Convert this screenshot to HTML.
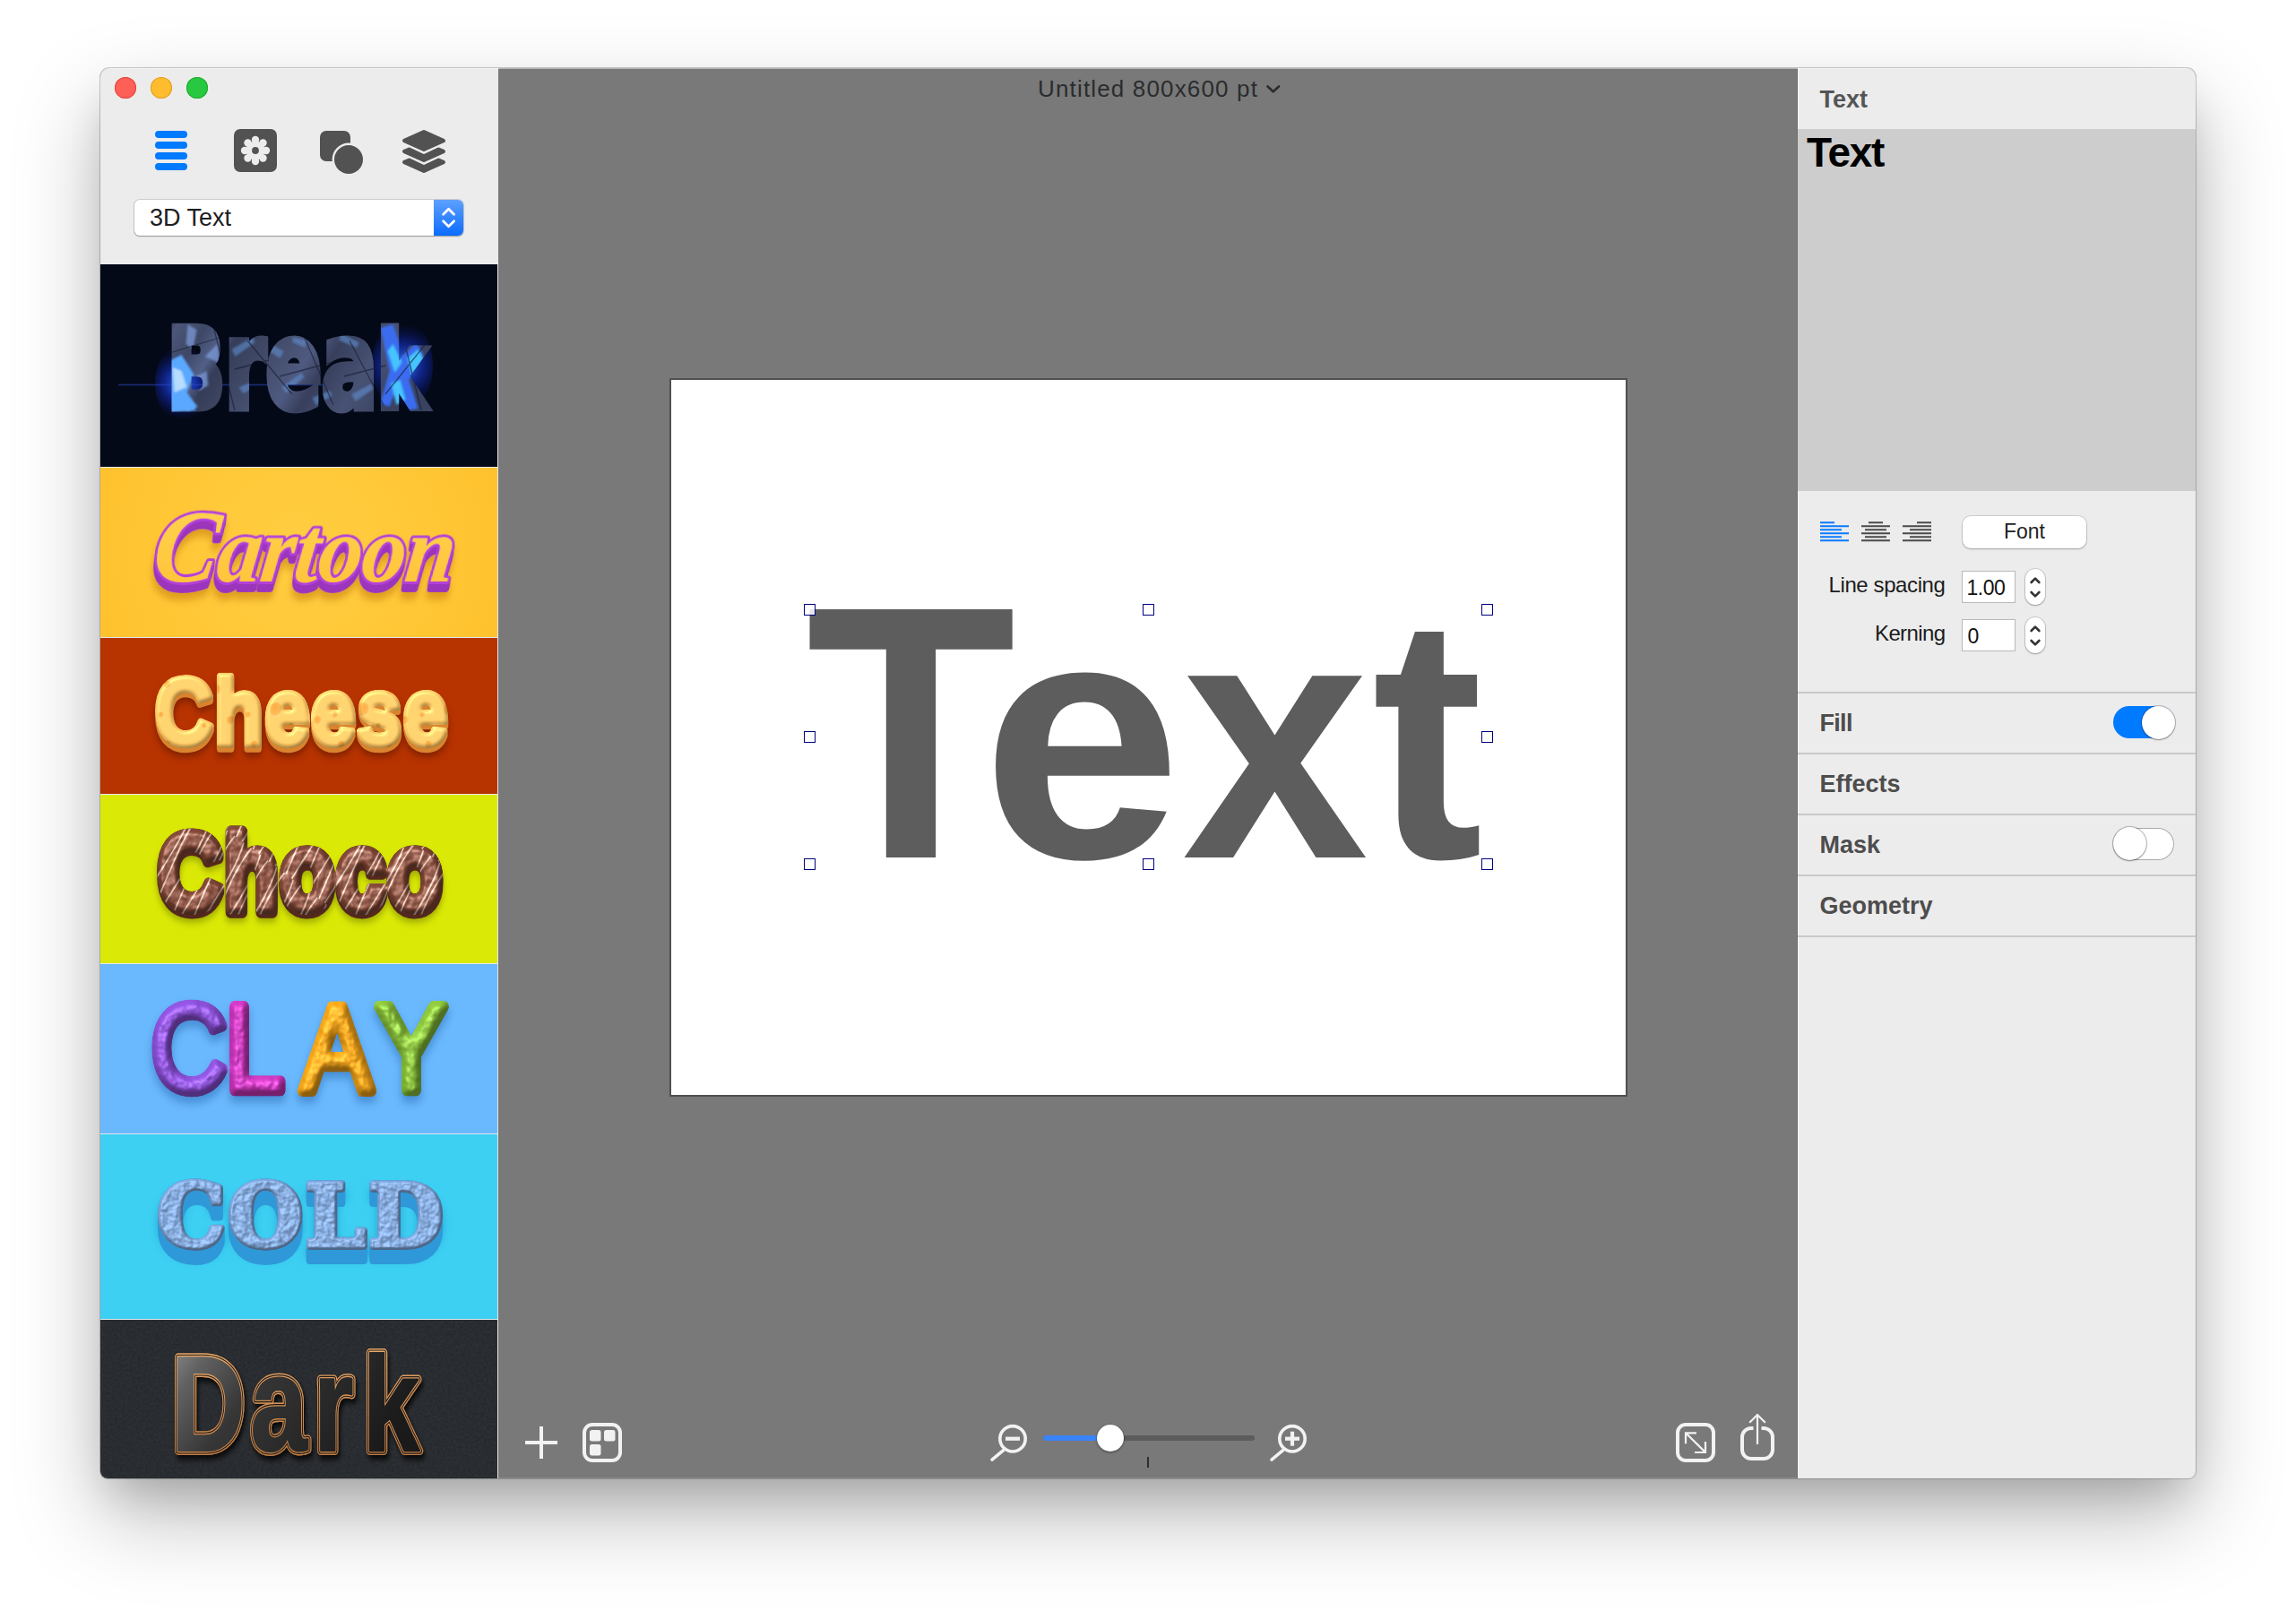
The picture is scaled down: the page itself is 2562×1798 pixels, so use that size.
<!DOCTYPE html>
<html lang="en">
<head>
<meta charset="utf-8">
<title>Untitled 800x600 pt</title>
<style>
html,body{margin:0;padding:0;background:#fff;}
body{width:2562px;height:1798px;overflow:hidden;position:relative;font-family:"Liberation Sans",sans-serif;}
.abs,.win *{position:absolute;box-sizing:border-box;}
.shadow{position:absolute;left:112px;top:76px;width:2338px;height:1574px;border-radius:10px 10px 8px 8px;
  box-shadow:0 0 0 1px rgba(0,0,0,.2),0 42px 96px rgba(0,0,0,.27),0 26px 44px -12px rgba(0,0,0,.16);}
.win{position:absolute;left:112px;top:76px;width:2338px;height:1574px;border-radius:10px 10px 8px 8px;overflow:hidden;background:#797979;}
.pg{left:-112px;top:-76px;width:2562px;height:1798px;}
.t{white-space:nowrap;line-height:1;}
/* sidebar */
.side{left:112px;top:75px;width:444px;height:1575px;background:#ececec;}
.canvasarea{left:556px;top:75px;width:1450px;height:1575px;background:#797979;}
.panel{left:2006px;top:75px;width:444px;height:1575px;background:#ececec;}
.sec{font-size:27px;font-weight:bold;color:#4d4d4d;}
.big{font-size:384px;font-weight:bold;color:#5d5d5d;white-space:nowrap;line-height:1;top:631.7px;}
.big span{position:static;display:inline-block;transform-origin:50% 84.65%;}
.hd{width:13px;height:13px;border:1.5px solid #00007f;background:rgba(255,255,255,.85);}
.tl{width:24px;height:24px;border-radius:50%;top:86px;}
</style>
</head>
<body>
<div class="shadow"></div>
<div class="win"><div class="pg">
<!--SIDEBAR-->
<div class="side"></div>
<div class="tl" style="left:128px;background:#fe5f57;box-shadow:inset 0 0 0 1px #e2463e;"></div>
<div class="tl" style="left:168px;background:#febc2e;box-shadow:inset 0 0 0 1px #e0a028;"></div>
<div class="tl" style="left:208px;background:#28c840;box-shadow:inset 0 0 0 1px #1eab2f;"></div>
<svg class="abs" style="left:112px;top:75px" width="444" height="220" viewBox="112 75 444 220">
  <g fill="#007aff">
    <rect x="173" y="146" width="36" height="8" rx="4"/><rect x="173" y="158" width="36" height="8" rx="4"/>
    <rect x="173" y="170" width="36" height="8" rx="4"/><rect x="173" y="182" width="36" height="8" rx="4"/>
  </g>
  <rect x="261" y="144" width="48" height="48" rx="7" fill="#525252"/>
  <g fill="#ececec">
    <circle cx="285" cy="168" r="10.5"/>
    <circle cx="285" cy="156" r="4.2"/><circle cx="285" cy="180" r="4.2"/><circle cx="273" cy="168" r="4.2"/><circle cx="297" cy="168" r="4.2"/>
    <circle cx="276.5" cy="159.5" r="4.2"/><circle cx="293.5" cy="159.5" r="4.2"/><circle cx="276.5" cy="176.5" r="4.2"/><circle cx="293.5" cy="176.5" r="4.2"/>
  </g>
  <circle cx="285" cy="168" r="3.9" fill="#525252"/>
  <rect x="357" y="146" width="34" height="34" rx="7" fill="#525252"/>
  <circle cx="389" cy="178" r="18.4" fill="#ececec"/>
  <circle cx="389" cy="178" r="16" fill="#525252"/>
  <g fill="#525252" stroke="#525252" stroke-width="4.4" stroke-linejoin="round">
    <path d="M473 147.2L494.8 157L473 166.8L451.2 157Z"/>
    <path d="M451.2 169L456.6 166.7L473 174.6L489.4 166.7L494.8 169L473 178.8Z"/>
    <path d="M451.2 181L456.6 178.7L473 186.6L489.4 178.7L494.8 181L473 190.8Z"/>
  </g>
</svg>
<div class="dd" style="left:150px;top:223px;width:367px;height:40px;border-radius:6px;background:#fff;box-shadow:0 0 0 1px rgba(0,0,0,.13),0 1px 1.5px rgba(0,0,0,.28);overflow:hidden;">
  <div style="left:334px;top:0;width:33px;height:40px;background:linear-gradient(#5ea0ff,#0b6cff);"></div>
  <svg style="left:334px;top:0" width="33" height="40" viewBox="0 0 33 40"><path d="M10.6 16.2L16.6 10.2L22.6 16.2M10.6 23.8L16.6 29.8L22.6 23.8" fill="none" stroke="#fff" stroke-width="2.7" stroke-linecap="round" stroke-linejoin="round"/></svg>
  <div class="t" style="left:17px;top:7.3px;font-size:27px;color:#1d2023;">3D Text</div>
</div>
<!--THUMBS-->
<div class="thumbs" style="left:112px;top:295px;width:444px;height:1355px;background:#e4e8ea;overflow:hidden;"></div>
<!--T1 Break-->
<svg class="abs th" style="left:112px;top:295px" width="443" height="226" viewBox="112 295 443 226">
  <defs>
    <linearGradient id="brk" x1="0" y1="0" x2="1" y2=".35">
      <stop offset="0" stop-color="#434b68"/><stop offset=".06" stop-color="#333a54"/><stop offset=".1" stop-color="#4c5678"/>
      <stop offset=".2" stop-color="#3e4766"/><stop offset=".28" stop-color="#525f88"/><stop offset=".33" stop-color="#353d58"/>
      <stop offset=".5" stop-color="#444d6c"/><stop offset=".62" stop-color="#4f5a80"/><stop offset=".7" stop-color="#373f5c"/>
      <stop offset=".85" stop-color="#485274"/><stop offset="1" stop-color="#394260"/>
    </linearGradient>
    <radialGradient id="glowL" gradientUnits="userSpaceOnUse" cx="203" cy="428" r="40"><stop offset="0" stop-color="#3a78ff" stop-opacity=".95"/><stop offset=".5" stop-color="#1a3cf0" stop-opacity=".5"/><stop offset="1" stop-color="#0a1aa0" stop-opacity="0"/></radialGradient>
    <radialGradient id="glowR" gradientUnits="userSpaceOnUse" cx="449" cy="408" r="46"><stop offset="0" stop-color="#3f8cff" stop-opacity=".95"/><stop offset=".5" stop-color="#1a3cf0" stop-opacity=".5"/><stop offset="1" stop-color="#0a1aa0" stop-opacity="0"/></radialGradient>
    <mask id="brkclip" maskUnits="userSpaceOnUse" x="112" y="295" width="443" height="226"><text transform="translate(187 454.5) scale(.683 1)" font-family="'DejaVu Sans','Liberation Sans',sans-serif" font-weight="bold" font-size="123" fill="#fff" stroke="#fff" stroke-width="9"><tspan>B</tspan><tspan font-size="135">rea</tspan><tspan font-size="118">k</tspan></text></mask>
    <filter id="bblur" x="-20%" y="-20%" width="140%" height="140%"><feGaussianBlur stdDeviation="1.2"/></filter>
  </defs>
  <rect x="112" y="295" width="443" height="226" fill="#040918"/>
  <ellipse cx="203" cy="428" rx="30" ry="44" fill="url(#glowL)"/>
  <ellipse cx="449" cy="408" rx="34" ry="52" fill="url(#glowR)"/>
  <rect x="132" y="428.7" width="232" height="1.6" fill="#2a48c8" opacity=".55"/>
  <text transform="translate(187 454.5) scale(.683 1)" font-family="'DejaVu Sans','Liberation Sans',sans-serif" font-weight="bold" font-size="123" fill="url(#brk)" stroke="url(#brk)" stroke-width="9" stroke-linejoin="miter"><tspan>B</tspan><tspan font-size="135">rea</tspan><tspan font-size="118">k</tspan></text>
  <g mask="url(#brkclip)">
    <g filter="url(#bblur)" transform="translate(-3.5 0)">
    <path d="M190 404l16-8 14 22-8 20 12 16-10 6-24-10zM192 440l20 2 10 16-28 2z" fill="#5aa8ff"/>
    <path d="M196 410l10 4 6 18-14 6z" fill="#b8dcff"/>
    <path d="M213 362l10 6-4 22-8-6zM232 398l14-14 4 22zM222 420l12-6 2 16-10 6z" fill="#7f9fe0" opacity=".7"/>
    <path d="M428 366l14-4 12 34 14-14 8 14-16 28 10 32-12 2-12-26-8 22-10-4 10-36z" fill="#3a6cf0"/>
    <path d="M442 384l10 20-8 12-8-24zM458 400l12-10 6 10-12 22zM440 428l10-4 6 22-10 6z" fill="#45c4ff"/>
    <path d="M262 390l24-14 2 6-22 16zM270 432l26-10 3 5-24 12zM306 384l14 8-4 8-12-8zM318 432l22-16 3 5-20 18zM352 444l20-8 2 6-18 10zM330 376l16 4-2 8-14-6zM384 372l20 10-2 6-20-8zM396 440l22-12 2 6-20 14z" fill="#5f8fd0" opacity=".6"/>
    </g>
    <path d="M186 395L248 376M236 356L262 458M276 380L326 440M262 412L300 402M336 368L372 452M312 420L372 404M390 380L428 452M384 420L430 408M446 360L470 458M430 440L478 380" stroke="#141a30" stroke-width="1.3" fill="none" opacity=".6"/>
  </g>
</svg>
<!--T2 Cartoon-->
<svg class="abs th" style="left:112px;top:522px" width="443" height="189" viewBox="112 522 443 189">
  <defs>
    <radialGradient id="cbg" gradientUnits="userSpaceOnUse" cx="333" cy="616" r="260"><stop offset="0" stop-color="#ffce42"/><stop offset="1" stop-color="#ffc12c"/></radialGradient>
    <linearGradient id="cfill" x1="0" y1="0" x2="0" y2="1"><stop offset="0" stop-color="#ffd552"/><stop offset="1" stop-color="#ffc136"/></linearGradient>
    <filter id="cext" x="-5%" y="-20%" width="110%" height="160%">
      <feMorphology in="SourceAlpha" operator="dilate" radius="0 3.5" result="d"/>
      <feOffset in="d" dy="4.5" result="do"/>
      <feFlood flood-color="#9b34bc"/><feComposite in2="do" operator="in" result="ext"/>
      <feGaussianBlur in="do" stdDeviation="4" result="b"/><feOffset in="b" dy="8" result="bo"/>
      <feFlood flood-color="#b86a00" flood-opacity=".45"/><feComposite in2="bo" operator="in" result="sh"/>
      <feMerge><feMergeNode in="sh"/><feMergeNode in="ext"/><feMergeNode in="SourceGraphic"/></feMerge>
    </filter>
  </defs>
  <rect x="112" y="522" width="443" height="189" fill="url(#cbg)"/>
  <text transform="translate(168 649) skewX(-7) scale(.935 1)" font-family="'Liberation Serif','DejaVu Serif',serif" font-weight="bold" font-style="italic" font-size="106" fill="url(#cfill)" stroke="#b540d8" stroke-width="6" stroke-linejoin="round" paint-order="stroke" filter="url(#cext)" letter-spacing="-1"><tspan font-size="116">C</tspan>artoon</text>
</svg>
<!--T3 Cheese-->
<svg class="abs th" style="left:112px;top:712px" width="443" height="174" viewBox="112 712 443 174">
  <defs>
    <radialGradient id="hole" cx=".4" cy=".35" r=".7"><stop offset="0" stop-color="#ee9f38"/><stop offset=".7" stop-color="#f4b04c"/><stop offset="1" stop-color="#ffd888"/></radialGradient>
    <pattern id="chholes" patternUnits="userSpaceOnUse" x="0" y="-80" width="113" height="67">
      <rect width="113" height="67" fill="#ffc965"/>
      <g fill="url(#hole)"><circle cx="16" cy="14" r="4.5"/><circle cx="44" cy="42" r="8"/><circle cx="80" cy="20" r="6"/><circle cx="98" cy="54" r="5"/><circle cx="64" cy="60" r="3.2"/><circle cx="8" cy="48" r="3.5"/></g>
    </pattern>
    <filter id="fcheese" x="-10%" y="-25%" width="120%" height="170%" color-interpolation-filters="sRGB"><feGaussianBlur in="SourceAlpha" stdDeviation="2.2" result="bl"/><feDiffuseLighting in="bl" surfaceScale="3.5" diffuseConstant="1.2" lighting-color="#fff" result="dif"><feDistantLight azimuth="235" elevation="48"/></feDiffuseLighting><feComposite in="dif" in2="SourceGraphic" operator="arithmetic" k1="0.38" k2="0" k3="0.66" k4="0" result="lit"/><feSpecularLighting in="bl" surfaceScale="3.5" specularConstant="0.18" specularExponent="18" lighting-color="#fff" result="spc"><feDistantLight azimuth="235" elevation="48"/></feSpecularLighting><feComposite in="spc" in2="SourceAlpha" operator="in" result="spi"/><feComposite in="lit" in2="spi" operator="arithmetic" k1="0" k2="1" k3="1" k4="0" result="face0"/><feComposite in="face0" in2="SourceAlpha" operator="in" result="face"/><feGaussianBlur in="SourceAlpha" stdDeviation="4.5" result="sb"/><feOffset in="sb" dy="9" result="so"/><feFlood flood-color="#641800" flood-opacity="0.7"/><feComposite in2="so" operator="in" result="sh"/><feMorphology in="SourceAlpha" operator="dilate" radius="0 2" result="ed"/><feOffset in="ed" dy="2.5" result="eo"/><feFlood flood-color="#d9832e"/><feComposite in2="eo" operator="in" result="ex"/><feMerge><feMergeNode in="sh"/><feMergeNode in="ex"/><feMergeNode in="face"/></feMerge></filter>
  </defs>
  <rect x="112" y="712" width="443" height="174" fill="#b73300"/>
  <text transform="translate(173 830) scale(.86 1)" font-family="'Liberation Sans','DejaVu Sans',sans-serif" font-weight="bold" font-size="104" fill="url(#chholes)" stroke="url(#chholes)" stroke-width="8.5" stroke-linejoin="round" letter-spacing="2" filter="url(#fcheese)">Cheese</text>
</svg>
<!--T4 Choco-->
<svg class="abs th" style="left:112px;top:887px" width="443" height="188" viewBox="112 887 443 188">
  <defs>
    <pattern id="chz" patternUnits="userSpaceOnUse" x="170" y="920" width="26" height="120" patternTransform="rotate(32 330 975)">
      <rect width="26" height="120" fill="#7a4333"/>
      <path d="M6 -2C-2 30 4 70 8 122M19 -2C27 30 21 70 17 122" fill="none" stroke="#ecd2c0" stroke-width="1.7"/>
    </pattern>
    <filter id="fchoco" x="-10%" y="-25%" width="120%" height="170%" color-interpolation-filters="sRGB"><feGaussianBlur in="SourceAlpha" stdDeviation="3.2" result="bl"/><feTurbulence type="fractalNoise" baseFrequency="0.09" numOctaves="2" seed="3" result="tn"/><feColorMatrix in="tn" type="matrix" values="0 0 0 0 0  0 0 0 0 0  0 0 0 0 0  1 0 0 0 0" result="ta"/><feComposite in="bl" in2="ta" operator="arithmetic" k1="0" k2="0.78" k3="0.22" k4="0" result="bt"/><feComposite in="bt" in2="bl" operator="in" result="bump"/><feDiffuseLighting in="bump" surfaceScale="6.5" diffuseConstant="1.15" lighting-color="#fff" result="dif"><feDistantLight azimuth="235" elevation="48"/></feDiffuseLighting><feComposite in="dif" in2="SourceGraphic" operator="arithmetic" k1="0.45" k2="0" k3="0.6" k4="0" result="lit"/><feSpecularLighting in="bump" surfaceScale="6.5" specularConstant="0.35" specularExponent="14" lighting-color="#fff" result="spc"><feDistantLight azimuth="235" elevation="48"/></feSpecularLighting><feComposite in="spc" in2="SourceAlpha" operator="in" result="spi"/><feComposite in="lit" in2="spi" operator="arithmetic" k1="0" k2="1" k3="1" k4="0" result="face0"/><feComposite in="face0" in2="SourceAlpha" operator="in" result="face"/><feGaussianBlur in="SourceAlpha" stdDeviation="4" result="sb"/><feOffset in="sb" dy="8" result="so"/><feFlood flood-color="#6f7a00" flood-opacity="0.6"/><feComposite in2="so" operator="in" result="sh"/><feMorphology in="SourceAlpha" operator="dilate" radius="0 1.5" result="ed"/><feOffset in="ed" dy="2" result="eo"/><feFlood flood-color="#54281c"/><feComposite in2="eo" operator="in" result="ex"/><feMerge><feMergeNode in="sh"/><feMergeNode in="ex"/><feMergeNode in="face"/></feMerge></filter>
  </defs>
  <rect x="112" y="887" width="443" height="188" fill="#dbe906"/>
  <text transform="translate(176.5 1014) scale(.835 1)" font-family="'Liberation Sans','DejaVu Sans',sans-serif" font-weight="bold" font-size="118" fill="url(#chz)" stroke="url(#chz)" stroke-width="13" stroke-linejoin="round" letter-spacing="3" filter="url(#fchoco)">Choco</text>
</svg>
<!--T5 Clay-->
<svg class="abs th" style="left:112px;top:1076px" width="443" height="189" viewBox="112 1076 443 189">
  <defs><filter id="fclay" x="-10%" y="-25%" width="120%" height="170%" color-interpolation-filters="sRGB"><feGaussianBlur in="SourceAlpha" stdDeviation="4.5" result="bl"/><feTurbulence type="fractalNoise" baseFrequency="0.085" numOctaves="2" seed="3" result="tn"/><feColorMatrix in="tn" type="matrix" values="0 0 0 0 0  0 0 0 0 0  0 0 0 0 0  1 0 0 0 0" result="ta"/><feComposite in="bl" in2="ta" operator="arithmetic" k1="0" k2="0.76" k3="0.24" k4="0" result="bt"/><feComposite in="bt" in2="bl" operator="in" result="bump"/><feDiffuseLighting in="bump" surfaceScale="9" diffuseConstant="1.1" lighting-color="#fff" result="dif"><feDistantLight azimuth="235" elevation="48"/></feDiffuseLighting><feComposite in="dif" in2="SourceGraphic" operator="arithmetic" k1="0.47" k2="0" k3="0.58" k4="0" result="lit"/><feSpecularLighting in="bump" surfaceScale="9" specularConstant="0.2" specularExponent="12" lighting-color="#fff" result="spc"><feDistantLight azimuth="235" elevation="48"/></feSpecularLighting><feComposite in="spc" in2="SourceAlpha" operator="in" result="spi"/><feComposite in="lit" in2="spi" operator="arithmetic" k1="0" k2="1" k3="1" k4="0" result="face0"/><feComposite in="face0" in2="SourceAlpha" operator="in" result="face"/><feGaussianBlur in="SourceAlpha" stdDeviation="5" result="sb"/><feOffset in="sb" dy="7" result="so"/><feFlood flood-color="#1f5fa8" flood-opacity="0.45"/><feComposite in2="so" operator="in" result="sh"/><feMerge><feMergeNode in="sh"/><feMergeNode in="face"/></feMerge></filter></defs>
  <rect x="112" y="1076" width="443" height="189" fill="#6ab8fd"/>
  <text transform="translate(0 1217) scale(.86 1)" font-family="'Liberation Sans','DejaVu Sans',sans-serif" font-size="136" stroke-width="13" stroke-linejoin="round" stroke-linecap="round" filter="url(#fclay)" x="196.5 293 392 488.5"><tspan fill="#8a4fd6" stroke="#8a4fd6">C</tspan><tspan fill="#c936bc" stroke="#c936bc">L</tspan><tspan fill="#f2a41a" stroke="#f2a41a">A</tspan><tspan fill="#88c03a" stroke="#88c03a">Y</tspan></text>
</svg>
<!--T6 Cold-->
<svg class="abs th" style="left:112px;top:1266px" width="443" height="206" viewBox="112 1266 443 206">
  <defs><filter id="fcold" x="-10%" y="-25%" width="120%" height="170%" color-interpolation-filters="sRGB"><feGaussianBlur in="SourceAlpha" stdDeviation="1.8" result="bl"/><feTurbulence type="fractalNoise" baseFrequency="0.13" numOctaves="2" seed="3" result="tn"/><feColorMatrix in="tn" type="matrix" values="0 0 0 0 0  0 0 0 0 0  0 0 0 0 0  1 0 0 0 0" result="ta"/><feComposite in="bl" in2="ta" operator="arithmetic" k1="0" k2="0.58" k3="0.42" k4="0" result="bt"/><feComposite in="bt" in2="bl" operator="in" result="bump"/><feDiffuseLighting in="bump" surfaceScale="5" diffuseConstant="1.08" lighting-color="#fff" result="dif"><feDistantLight azimuth="235" elevation="48"/></feDiffuseLighting><feComposite in="dif" in2="SourceGraphic" operator="arithmetic" k1="0.42" k2="0" k3="0.6" k4="0" result="lit"/><feSpecularLighting in="bump" surfaceScale="5" specularConstant="0.14" specularExponent="10" lighting-color="#fff" result="spc"><feDistantLight azimuth="235" elevation="48"/></feSpecularLighting><feComposite in="spc" in2="SourceAlpha" operator="in" result="spi"/><feComposite in="lit" in2="spi" operator="arithmetic" k1="0" k2="1" k3="1" k4="0" result="face0"/><feComposite in="face0" in2="SourceAlpha" operator="in" result="face"/><feGaussianBlur in="SourceAlpha" stdDeviation="5" result="sb"/><feOffset in="sb" dy="10" result="so"/><feFlood flood-color="#0f78b8" flood-opacity="0.5"/><feComposite in2="so" operator="in" result="sh"/><feMorphology in="SourceAlpha" operator="dilate" radius="0 7.5" result="ed"/><feOffset in="ed" dy="8" result="eo"/><feFlood flood-color="#2f98d8"/><feComposite in2="eo" operator="in" result="ex"/><feMerge><feMergeNode in="sh"/><feMergeNode in="ex"/><feMergeNode in="face"/></feMerge></filter></defs>
  <rect x="112" y="1266" width="443" height="206" fill="#3dd0f3"/>
  <text transform="translate(176 1391) scale(1.0 1)" font-family="'DejaVu Serif','Liberation Serif',serif" font-weight="bold" font-size="95" fill="#84abe0" stroke="#84abe0" stroke-width="8" stroke-linejoin="round" letter-spacing="3.5" filter="url(#fcold)">COLD</text>
</svg>
<!--T7 Dark-->
<svg class="abs th" style="left:112px;top:1473px" width="443" height="177" viewBox="112 1473 443 177">
  <defs>
    <linearGradient id="dkf" x1="0" y1="0" x2="1" y2=".45"><stop offset="0" stop-color="#9a9a9a"/><stop offset=".18" stop-color="#626262"/><stop offset=".42" stop-color="#363636"/><stop offset="1" stop-color="#1a1a1a"/></linearGradient>
    <linearGradient id="dks" x1="0" y1="0" x2="0" y2="1"><stop offset="0" stop-color="#f0b070"/><stop offset="1" stop-color="#b8733a"/></linearGradient>
    <filter id="fdark" x="-5%" y="-10%" width="110%" height="130%"><feGaussianBlur in="SourceAlpha" stdDeviation="3"/><feOffset dx="2" dy="5" result="o"/><feFlood flood-color="#000" flood-opacity=".8"/><feComposite in2="o" operator="in" result="s"/><feMerge><feMergeNode in="s"/><feMergeNode in="SourceGraphic"/></feMerge></filter>
    <text id="dkt" font-family="'Liberation Sans','DejaVu Sans',sans-serif" font-weight="bold" font-size="150" x="-5 111.1 203.9 276">Dark</text>
    <filter id="dnoise" x="0" y="0" width="100%" height="100%"><feTurbulence type="fractalNoise" baseFrequency=".35" numOctaves="2" seed="5"/><feColorMatrix type="matrix" values="0 0 0 0 1  0 0 0 0 1  0 0 0 0 1  .07 0 0 0 -.015"/></filter>
  </defs>
  <rect x="112" y="1473" width="443" height="177" fill="#25282c"/>
  <rect x="112" y="1473" width="443" height="177" filter="url(#dnoise)"/>
  <g transform="translate(195 1619) scale(.76 1)" stroke-linejoin="round">
    <use href="#dkt" fill="#c98950" stroke="url(#dks)" stroke-width="10" filter="url(#fdark)"/>
    <use href="#dkt" fill="#17181a" stroke="#17181a" stroke-width="7.2"/>
    <use href="#dkt" fill="#c98950" stroke="url(#dks)" stroke-width="4.8"/>
    <use href="#dkt" fill="url(#dkf)" stroke="url(#dkf)" stroke-width="2.2"/>
  </g>
</svg>
<!--CANVAS-->
<div class="canvasarea"></div>
<div class="t" style="left:1158px;top:86.1px;font-size:26px;color:#2a2c2e;letter-spacing:1.16px;">Untitled 800x600 pt</div>
<svg class="abs" style="left:1410px;top:90px" width="22" height="18" viewBox="0 0 22 18"><path d="M4.5 6.5L10.7 12.3L17 6.5" fill="none" stroke="#2a2c2e" stroke-width="2.6" stroke-linecap="round" stroke-linejoin="round"/></svg>
<div style="left:747px;top:422px;width:1069px;height:802px;background:#fff;border:2px solid #4f4f4f;"></div>
<div class="big" style="left:899.2px;"><span style="transform:scaleY(1.0485)">T</span><span style="margin-left:-28.5px;transform:scaleX(1.045);transform-origin:100% 84.65%">e</span><span style="transform:scaleX(.973);transform-origin:0 84.65%">x</span><span style="transform:scale(.968,1.006);transform-origin:0 84.65%;margin-left:-1.5px">t</span></div>
<div class="hd" style="left:897px;top:674px;"></div><div class="hd" style="left:1274.7px;top:674px;"></div><div class="hd" style="left:1652.5px;top:674px;"></div><div class="hd" style="left:897px;top:815.5px;"></div><div class="hd" style="left:1652.5px;top:815.5px;"></div><div class="hd" style="left:897px;top:958px;"></div><div class="hd" style="left:1274.7px;top:958px;"></div><div class="hd" style="left:1652.5px;top:958px;"></div>
<!--BOTTOMBAR-->
<svg class="abs" style="left:556px;top:1560px" width="1450" height="90" viewBox="556 1560 1450 90">
  <g fill="#f2f2f2"><rect x="586" y="1608" width="36" height="4"/><rect x="602" y="1592" width="4" height="36"/>
   <rect x="658" y="1596" width="12.5" height="12.5" rx="2.5"/><rect x="674" y="1596" width="12.5" height="12.5" rx="2.5"/><rect x="658" y="1612" width="12.5" height="12.5" rx="2.5"/></g>
  <g fill="none" stroke="#f2f2f2" stroke-width="4">
   <rect x="652" y="1590" width="40" height="40" rx="9"/>
   <rect x="1872" y="1590" width="40" height="40" rx="9"/>
   <path d="M1956.5 1594H1954a10 10 0 0 0-10 10v14a10 10 0 0 0 10 10h14a10 10 0 0 0 10-10v-14a10 10 0 0 0-10-10h-2.5"/>
  </g>
  <g fill="none" stroke="#f2f2f2" stroke-width="2.2">
   <path d="M1881 1611.2V1599.3H1893M1881.5 1599.8L1902.7 1620.6M1891 1621H1903V1609"/>
   <path d="M1961 1612V1579M1952.2 1587.8L1961 1579L1969.8 1587.8"/>
  </g>
  <g fill="none" stroke="#f2f2f2" stroke-width="3.6" stroke-linecap="round">
   <circle cx="1130" cy="1605.8" r="14.2"/><path d="M1119.6 1618.6L1107 1629.2"/>
   <circle cx="1442" cy="1605.8" r="14.2"/><path d="M1431.6 1618.6L1419 1629.2"/>
  </g>
  <g fill="#f2f2f2"><rect x="1122" y="1603.6" width="16" height="4.2"/><rect x="1434" y="1603.6" width="16" height="4.2"/><rect x="1439.9" y="1597.7" width="4.2" height="16"/></g>
  <rect x="1164" y="1602" width="236" height="6" rx="3" fill="#5c5c5c"/>
  <rect x="1164" y="1602" width="80" height="6" rx="3" fill="#3b84f7"/>
  <rect x="1280" y="1626" width="2" height="12" fill="#2e2e2e"/>
</svg>
<div style="left:1224px;top:1590px;width:30px;height:30px;border-radius:50%;background:#fff;box-shadow:0 1px 3px rgba(0,0,0,.4),0 0 0 .5px rgba(0,0,0,.15);"></div>
<!--PANEL-->
<div class="panel"></div>
<div style="left:2005px;top:76px;width:1px;height:1574px;background:#6f6f6f;"></div>
<div style="left:2006px;top:76px;width:1px;height:1574px;background:#f5f5f5;"></div>
<div style="left:112px;top:76px;width:2338px;height:1px;background:rgba(255,255,255,.45);"></div>
<div style="left:556px;top:1649px;width:1449px;height:1px;background:rgba(255,255,255,.12);"></div>
<div class="t" style="left:2030.5px;top:98.1px;font-size:27px;font-weight:bold;color:#555;">Text</div>
<div style="left:2006px;top:144px;width:444px;height:404px;background:#cdcdcd;"></div>
<div class="t" style="left:2016px;top:147.4px;font-size:46px;font-weight:bold;color:#000;letter-spacing:-1.3px;">Text</div>
<svg class="abs" style="left:2006px;top:561px" width="444" height="60" viewBox="2006 560 444 60">
  <g fill="#0a7aff"><rect x="2031" y="581.25" width="16" height="2"/><rect x="2031" y="585.25" width="32" height="2"/><rect x="2031" y="589.25" width="24" height="2"/><rect x="2031" y="593.25" width="32" height="2"/><rect x="2031" y="597.25" width="24" height="2"/><rect x="2031" y="601.25" width="32" height="2"/></g><g fill="#4a4a4a"><rect x="2085" y="581.25" width="16" height="2"/><rect x="2077" y="585.25" width="32" height="2"/><rect x="2081" y="589.25" width="24" height="2"/><rect x="2077" y="593.25" width="32" height="2"/><rect x="2081" y="597.25" width="24" height="2"/><rect x="2077" y="601.25" width="32" height="2"/><rect x="2139" y="581.25" width="16" height="2"/><rect x="2123" y="585.25" width="32" height="2"/><rect x="2131" y="589.25" width="24" height="2"/><rect x="2123" y="593.25" width="32" height="2"/><rect x="2131" y="597.25" width="24" height="2"/><rect x="2123" y="601.25" width="32" height="2"/></g>
</svg>
<div class="btn" style="left:2190px;top:576px;width:138px;height:36px;border-radius:9px;background:#fff;box-shadow:0 0 0 1px rgba(0,0,0,.12),0 1px 2px rgba(0,0,0,.22);"></div>
<div class="t" style="left:2190px;top:581.8px;width:138px;text-align:center;font-size:23px;color:#222;">Font</div>
<div class="t" style="left:1970px;width:200.5px;text-align:right;top:641px;font-size:24px;color:#1c1c1c;letter-spacing:-0.4px;">Line spacing</div>
<div class="t" style="left:1970px;width:200.5px;text-align:right;top:695.2px;font-size:24px;color:#1c1c1c;letter-spacing:-0.6px;">Kerning</div>
<div style="left:2189px;top:637px;width:60px;height:36px;background:#fff;border:1px solid #b9b9b9;"></div>
<div style="left:2189px;top:691px;width:60px;height:36px;background:#fff;border:1px solid #b9b9b9;"></div>
<div class="t" style="left:2194.5px;top:645.2px;font-size:23px;color:#111;letter-spacing:-0.5px;">1.00</div>
<div class="t" style="left:2195.5px;top:699.2px;font-size:23px;color:#111;">0</div>
<div style="left:2260px;top:635px;width:22px;height:40px;border-radius:11px;background:#fff;box-shadow:0 0 0 1px rgba(0,0,0,.13),0 1px 2px rgba(0,0,0,.25);"></div>
<div style="left:2260px;top:689px;width:22px;height:40px;border-radius:11px;background:#fff;box-shadow:0 0 0 1px rgba(0,0,0,.13),0 1px 2px rgba(0,0,0,.25);"></div>
<svg class="abs" style="left:2260px;top:635px" width="22" height="94" viewBox="0 0 22 94"><g fill="none" stroke="#333" stroke-width="2.6" stroke-linecap="round" stroke-linejoin="round"><path d="M6.6 15L11 10.6L15.4 15M6.6 26L11 30.4L15.4 26"/><path d="M6.6 69L11 64.6L15.4 69M6.6 80L11 84.4L15.4 80"/></g></svg>
<div style="left:2006px;top:772px;width:444px;height:2px;background:#c9c9c9;"></div>
<div style="left:2006px;top:840px;width:444px;height:2px;background:#c9c9c9;"></div>
<div style="left:2006px;top:908px;width:444px;height:2px;background:#c9c9c9;"></div>
<div style="left:2006px;top:976px;width:444px;height:2px;background:#c9c9c9;"></div>
<div style="left:2006px;top:1044px;width:444px;height:2px;background:#c9c9c9;"></div>
<div class="t sec" style="left:2030.5px;top:794.1px;letter-spacing:-.7px;">Fill</div>
<div class="t sec" style="left:2030.5px;top:862.1px;">Effects</div>
<div class="t sec" style="left:2030.5px;top:930.1px;">Mask</div>
<div class="t sec" style="left:2030.5px;top:998.1px;">Geometry</div>
<div style="left:2358px;top:788px;width:68px;height:36px;border-radius:18px;background:#007aff;"></div>
<div style="left:2390px;top:787.5px;width:37px;height:37px;border-radius:50%;background:#fff;box-shadow:0 0 0 1px rgba(0,0,0,.22),0 1px 2px rgba(0,0,0,.28);"></div>
<div style="left:2358px;top:924px;width:68px;height:36px;border-radius:18px;background:#fff;box-shadow:inset 0 0 0 1px #a9a9a9;"></div>
<div style="left:2357.5px;top:923.3px;width:37px;height:37px;border-radius:50%;background:#fff;box-shadow:0 0 0 1px rgba(0,0,0,.24),0 1px 2px rgba(0,0,0,.28);"></div>
</div></div>
</body>
</html>
